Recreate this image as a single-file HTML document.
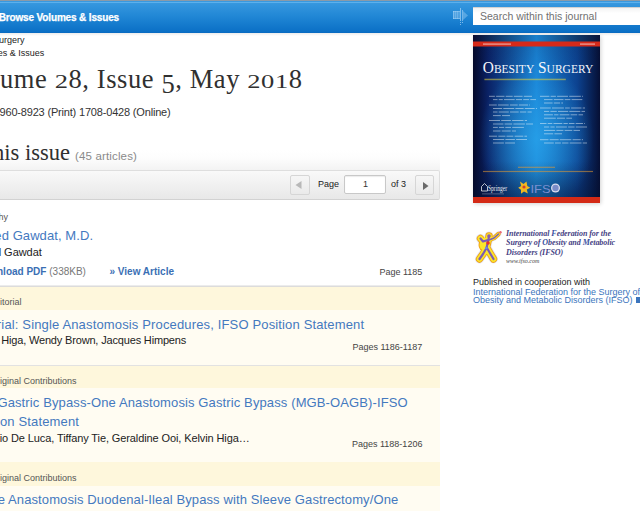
<!DOCTYPE html>
<html><head><meta charset="utf-8">
<style>
html,body{margin:0;padding:0;width:640px;height:511px;overflow:hidden;background:#fff;font-family:"Liberation Sans",sans-serif;}
.a{position:absolute;white-space:nowrap;line-height:1;}
#bar{position:absolute;left:0;top:0;width:640px;height:33px;background:linear-gradient(#3a9ae0,#2288d6 45%,#0b70c6 95%,#0a6ac0);border-top:1px solid #8a9aa8;box-sizing:border-box;}
#bar .hl{position:absolute;left:0;top:1px;width:640px;height:1px;background:#5cb0ec;}
#shadow{position:absolute;left:0;top:33px;width:640px;height:3px;background:linear-gradient(#ececec,#fff);}
.bv{left:-1.3px;top:12.5px;color:#fff;font-weight:bold;font-size:10px;letter-spacing:-0.15px;-webkit-text-stroke:0.25px #fff;}
#search{position:absolute;left:473px;top:7px;width:180px;height:18px;background:linear-gradient(#ececec,#f6f6f6 2px,#fafafa 4px,#fff 6px);box-shadow:inset 0 1px 0 rgba(0,0,0,.12);}
#search span{position:absolute;left:7px;top:4px;font-size:10.5px;color:#707070;line-height:1;white-space:nowrap;}
.s9{font-size:9px;}
.h1{font-family:"Liberation Serif",serif;font-size:26.5px;color:#303030;letter-spacing:0.59px;}
.os{display:inline-block;transform:scaleY(0.72);transform-origin:50% 22.2px;}
.dn{display:inline-block;transform:translateY(4.5px);}
.h2{font-family:"Liberation Serif",serif;font-size:22.5px;color:#303030;}
.cnt{font-size:11.5px;color:#8a8a8a;letter-spacing:0.15px;}
#pagerbg{position:absolute;left:0;top:150px;width:440px;height:20px;background:linear-gradient(#fff,#fdfdfd 40%,#f3f3f3);}
#pager{position:absolute;left:-10px;top:170px;width:450px;height:30px;box-sizing:border-box;border:1px solid #dedede;border-bottom-color:#d2d2d2;border-radius:2px;background:linear-gradient(#f9f9f9,#e8e8e8);}
.btn{position:absolute;width:19px;height:20px;box-sizing:border-box;border:1px solid #d6d6d6;border-radius:2px;background:linear-gradient(#f6f6f6,#eaeaea);}
.inp{position:absolute;left:344px;top:175px;width:42px;height:19px;box-sizing:border-box;border:1px solid #c8c8c8;border-radius:2px;background:#fff;box-shadow:inset 0 1px 1px rgba(0,0,0,.08);}
.cat{font-size:9px;color:#555;}
.title{font-size:13px;color:#4479bf;}
.auth{font-size:11px;color:#222;letter-spacing:-0.15px;}
.bl{font-size:10px;color:#3a6fb4;font-weight:bold;}
.gr{font-size:10px;color:#777;font-weight:normal;}
.pg{font-size:9px;color:#444;}
.sec{position:absolute;left:0;width:440px;}
.ifso{font-family:"Liberation Serif",serif;font-style:italic;font-weight:bold;font-size:8px;color:#464284;letter-spacing:-0.05px;}
</style></head><body>
<div id="bar"><div class="hl"></div></div>
<div id="shadow"></div>
<div class="a bv">Browse Volumes &amp; Issues</div>
<svg style="position:absolute;left:448px;top:4px" width="24" height="24" viewBox="0 0 24 24">
<g fill="#a8d4f6">
<rect x="5" y="7" width="7" height="8" opacity="0.35"/>
<rect x="5" y="7" width="7" height="1" opacity="0.5"/><rect x="5" y="14" width="7" height="1" opacity="0.5"/>
<rect x="5" y="7" width="1" height="8" opacity="0.5"/><rect x="7" y="7" width="1" height="8" opacity="0.3"/><rect x="9" y="7" width="1" height="8" opacity="0.3"/>
<rect x="12" y="4" width="1" height="13" opacity="0.7"/>
<rect x="14" y="6" width="1" height="11" opacity="0.6"/>
<path d="M15 7 L20 11.5 L15 16 Z" opacity="0.4"/>
<rect x="12" y="18" width="1" height="1" opacity="0.7"/><rect x="14" y="18" width="1" height="1" opacity="0.7"/><rect x="12" y="20" width="1" height="1" opacity="0.7"/>
</g></svg>
<div id="search"><span>Search within this journal</span></div>

<div class="a s9" style="left:-1px;top:35.8px;color:#222">urgery</div>
<div class="a s9" style="left:-2.3px;top:49.3px;color:#222">es &amp; Issues</div>

<div id="pagerbg"></div>
<div class="a h1" style="left:0px;top:65.8px">ume <span class="os">2</span>8, Issue <span class="dn">5</span>, May <span class="os">201</span>8</div>
<div class="a" style="left:-0.5px;top:106.7px;font-size:11px;color:#333;letter-spacing:-0.18px">960-8923 (Print) 1708-0428 (Online)</div>
<div class="a h2" style="left:-7px;top:142.2px">his issue</div>
<div class="a cnt" style="left:75px;top:151.3px">(45 articles)</div>

<div id="pager"></div>
<div class="btn" style="left:290px;top:175px;width:20px"></div>
<svg class="a" style="left:295px;top:180.8px" width="8" height="8"><path d="M6.5 0 L0.5 4 L6.5 8Z" fill="#b8b8b8"/></svg>
<div class="a pg" style="left:318px;top:180.3px;color:#222">Page</div>
<div class="inp"></div>
<div class="a pg" style="left:363px;top:180.3px;color:#333">1</div>
<div class="a pg" style="left:391px;top:180.3px;color:#222">of 3</div>
<div class="btn" style="left:415px;top:175px"></div>
<svg class="a" style="left:423px;top:181.5px" width="7" height="8"><path d="M0 0 L5.5 4 L0 8Z" fill="#6a6a6a"/></svg>

<div class="a cat" style="left:-1.5px;top:213.4px">hy</div>
<div class="a title" style="left:-5.7px;top:229px;letter-spacing:0.083px">ed Gawdat, M.D.</div>
<div class="a auth" style="left:-1.3px;top:247.2px;letter-spacing:-0.044px">l Gawdat</div>
<div class="a bl" style="left:-3px;top:266.5px">nload PDF <span class="gr">(338KB)</span></div>
<div class="a bl" style="left:109.5px;top:266.5px">» View Article</div>
<div class="a pg" style="left:379.5px;top:267.9px">Page 1185</div>

<div class="sec" style="top:285px;height:1px;background:#ececec"></div>
<div class="sec" style="top:286px;height:1px;background:#dcdcdc"></div>
<div class="sec" style="top:287px;height:23px;background:#fef7dc"></div>
<div class="sec" style="top:310px;height:55px;background:#fffcf2"></div>
<div class="a cat" style="left:0px;top:297.9px">itorial</div>
<div class="a title" style="left:-3.15px;top:318px;letter-spacing:0.15px">rial: Single Anastomosis Procedures, IFSO Position Statement</div>
<div class="a auth" style="left:1.2px;top:335.2px;letter-spacing:-0.166px">Higa, Wendy Brown, Jacques Himpens</div>
<div class="a pg" style="left:352.5px;top:343.2px">Pages 1186-1187</div>

<div class="sec" style="top:365px;height:1px;background:#e2e2e2"></div>
<div class="sec" style="top:366px;height:22px;background:#fef7dc"></div>
<div class="sec" style="top:388px;height:74px;background:#fffcf2"></div>
<div class="a cat" style="left:0px;top:376.9px">iginal Contributions</div>
<div class="a title" style="left:-2.6px;top:396.3px;letter-spacing:0.12px">Gastric Bypass-One Anastomosis Gastric Bypass (MGB-OAGB)-IFSO</div>
<div class="a title" style="left:-0.1px;top:414.8px;letter-spacing:0.15px">on Statement</div>
<div class="a auth" style="left:-0.3px;top:433.3px;letter-spacing:-0.106px">io De Luca, Tiffany Tie, Geraldine Ooi, Kelvin Higa…</div>
<div class="a pg" style="left:352px;top:439.9px">Pages 1188-1206</div>

<div class="sec" style="top:462px;height:24px;background:#fef7dc"></div>
<div class="sec" style="top:486px;height:30px;background:#fffcf2"></div>
<div class="a cat" style="left:0px;top:473.9px">iginal Contributions</div>
<div class="a title" style="left:-2.3px;top:493.2px;letter-spacing:0.108px">e Anastomosis Duodenal-Ileal Bypass with Sleeve Gastrectomy/One</div>

<!-- right column -->
<div class="a" style="left:473px;top:35px;width:127px;height:168px;box-shadow:1px 1px 4px rgba(0,0,0,0.18)"></div>
<svg style="position:absolute;left:473px;top:35px" width="127" height="168" viewBox="0 0 127 168">
<defs>
<linearGradient id="hg" x1="0" x2="1" y1="0" y2="0"><stop offset="0" stop-color="#040828"/><stop offset="0.12" stop-color="#0a2266"/><stop offset="0.5" stop-color="#1a84d6"/><stop offset="0.82" stop-color="#0c4290"/><stop offset="1" stop-color="#060f34"/></linearGradient>
<radialGradient id="rg" cx="50%" cy="62%" r="45%"><stop offset="0" stop-color="#2aa8ee" stop-opacity="0.7"/><stop offset="1" stop-color="#2aa8ee" stop-opacity="0"/></radialGradient>
<linearGradient id="vg" x1="0" x2="0" y1="0" y2="1"><stop offset="0" stop-color="#06102e" stop-opacity="0.15"/><stop offset="0.2" stop-color="#06102e" stop-opacity="0"/><stop offset="0.75" stop-color="#06102e" stop-opacity="0"/><stop offset="1" stop-color="#06102e" stop-opacity="0.55"/></linearGradient>
<linearGradient id="tg" x1="0" x2="1" y1="0" y2="0"><stop offset="0" stop-color="#0a0c30"/><stop offset="0.5" stop-color="#1a80cc"/><stop offset="1" stop-color="#0a1236"/></linearGradient>
</defs>
<rect width="127" height="168" fill="url(#hg)"/>
<rect width="127" height="168" fill="url(#rg)"/>
<rect width="127" height="168" fill="url(#vg)"/>
<rect width="127" height="7" fill="url(#tg)"/>
<rect y="6.5" width="127" height="5" fill="#d62a1a"/>
<rect x="10" y="8.4" width="28" height="1.4" fill="#fff" opacity="0.5"/>
<rect x="107" y="8.4" width="15" height="1.4" fill="#fff" opacity="0.5"/>
<text x="9.8" y="38" font-family="Liberation Serif" font-size="16" fill="#f4f6fa" textLength="110.5" lengthAdjust="spacingAndGlyphs">O<tspan font-size="12">BESITY</tspan> S<tspan font-size="12">URGERY</tspan></text>
<rect x="11.4" y="43.7" width="81.4" height="1.5" fill="#e4d23a" opacity="0.55"/>
<g fill="#fff" opacity="0.45">
<rect x="16.0" y="60.8" width="5.9" height="1.0"/>
<rect x="23.1" y="60.8" width="8.4" height="1.0"/>
<rect x="32.7" y="60.8" width="7.0" height="1.0"/>
<rect x="40.8" y="60.8" width="8.8" height="1.0"/>
<rect x="50.8" y="60.8" width="8.2" height="1.0"/>
<rect x="20.0" y="64.1" width="4.5" height="1.0"/>
<rect x="25.7" y="64.1" width="4.1" height="1.0"/>
<rect x="31.0" y="64.1" width="10.7" height="1.0"/>
<rect x="42.9" y="64.1" width="6.1" height="1.0"/>
<rect x="50.2" y="64.1" width="5.9" height="1.0"/>
<rect x="57.3" y="64.1" width="5.7" height="1.0"/>
<rect x="16.0" y="69.5" width="7.8" height="1.0"/>
<rect x="25.0" y="69.5" width="10.7" height="1.0"/>
<rect x="36.9" y="69.5" width="7.8" height="1.0"/>
<rect x="45.9" y="69.5" width="9.1" height="1.0"/>
<rect x="56.2" y="69.5" width="0.8" height="1.0"/>
<rect x="20.0" y="73.0" width="9.1" height="1.0"/>
<rect x="30.3" y="73.0" width="10.9" height="1.0"/>
<rect x="42.4" y="73.0" width="8.2" height="1.0"/>
<rect x="51.8" y="73.0" width="9.9" height="1.0"/>
<rect x="62.9" y="73.0" width="1.1" height="1.0"/>
<rect x="20.0" y="76.5" width="4.5" height="1.0"/>
<rect x="25.7" y="76.5" width="10.1" height="1.0"/>
<rect x="37.0" y="76.5" width="8.7" height="1.0"/>
<rect x="46.9" y="76.5" width="6.4" height="1.0"/>
<rect x="54.5" y="76.5" width="4.2" height="1.0"/>
<rect x="60.0" y="76.5" width="0.0" height="1.0"/>
<rect x="20.0" y="80.1" width="7.8" height="1.0"/>
<rect x="29.0" y="80.1" width="8.0" height="1.0"/>
<rect x="16.0" y="85.0" width="11.0" height="1.0"/>
<rect x="28.2" y="85.0" width="9.7" height="1.0"/>
<rect x="39.1" y="85.0" width="11.4" height="1.0"/>
<rect x="51.7" y="85.0" width="2.3" height="1.0"/>
<rect x="20.0" y="88.5" width="10.4" height="1.0"/>
<rect x="31.6" y="88.5" width="7.6" height="1.0"/>
<rect x="40.4" y="88.5" width="11.5" height="1.0"/>
<rect x="53.0" y="88.5" width="7.0" height="1.0"/>
<rect x="20.0" y="91.9" width="4.8" height="1.0"/>
<rect x="26.0" y="91.9" width="5.1" height="1.0"/>
<rect x="32.3" y="91.9" width="5.7" height="1.0"/>
<rect x="39.2" y="91.9" width="11.7" height="1.0"/>
<rect x="20.0" y="95.5" width="7.5" height="1.0"/>
<rect x="28.7" y="95.5" width="9.0" height="1.0"/>
<rect x="38.9" y="95.5" width="4.1" height="1.0"/>
<rect x="16.0" y="100.7" width="8.1" height="1.0"/>
<rect x="25.3" y="100.7" width="7.1" height="1.0"/>
<rect x="33.5" y="100.7" width="6.8" height="1.0"/>
<rect x="41.6" y="100.7" width="8.7" height="1.0"/>
<rect x="51.4" y="100.7" width="2.6" height="1.0"/>
<rect x="20.0" y="104.0" width="11.2" height="1.0"/>
<rect x="32.4" y="104.0" width="9.5" height="1.0"/>
<rect x="43.1" y="104.0" width="10.9" height="1.0"/>
<rect x="20.0" y="107.5" width="10.9" height="1.0"/>
<rect x="32.1" y="107.5" width="9.9" height="1.0"/>
<rect x="67.0" y="60.8" width="9.4" height="1.0"/>
<rect x="77.6" y="60.8" width="5.3" height="1.0"/>
<rect x="84.1" y="60.8" width="10.9" height="1.0"/>
<rect x="96.2" y="60.8" width="11.7" height="1.0"/>
<rect x="109.1" y="60.8" width="0.9" height="1.0"/>
<rect x="71.0" y="64.1" width="8.6" height="1.0"/>
<rect x="80.8" y="64.1" width="9.7" height="1.0"/>
<rect x="91.7" y="64.1" width="5.7" height="1.0"/>
<rect x="98.6" y="64.1" width="10.7" height="1.0"/>
<rect x="71.0" y="67.5" width="8.6" height="1.0"/>
<rect x="80.8" y="67.5" width="6.3" height="1.0"/>
<rect x="88.3" y="67.5" width="1.7" height="1.0"/>
<rect x="67.0" y="72.5" width="10.8" height="1.0"/>
<rect x="79.0" y="72.5" width="11.9" height="1.0"/>
<rect x="92.1" y="72.5" width="4.7" height="1.0"/>
<rect x="98.1" y="72.5" width="10.4" height="1.0"/>
<rect x="109.7" y="72.5" width="2.3" height="1.0"/>
<rect x="71.0" y="75.9" width="5.2" height="1.0"/>
<rect x="77.4" y="75.9" width="6.4" height="1.0"/>
<rect x="85.0" y="75.9" width="10.2" height="1.0"/>
<rect x="96.3" y="75.9" width="11.0" height="1.0"/>
<rect x="108.5" y="75.9" width="3.5" height="1.0"/>
<rect x="71.0" y="79.3" width="8.9" height="1.0"/>
<rect x="81.1" y="79.3" width="4.4" height="1.0"/>
<rect x="86.7" y="79.3" width="9.7" height="1.0"/>
<rect x="97.6" y="79.3" width="6.6" height="1.0"/>
<rect x="105.5" y="79.3" width="4.5" height="1.0"/>
<rect x="71.0" y="82.7" width="11.8" height="1.0"/>
<rect x="84.0" y="82.7" width="8.0" height="1.0"/>
<rect x="93.3" y="82.7" width="5.7" height="1.0"/>
<rect x="67.0" y="88.0" width="6.5" height="1.0"/>
<rect x="74.7" y="88.0" width="4.6" height="1.0"/>
<rect x="80.5" y="88.0" width="8.8" height="1.0"/>
<rect x="90.5" y="88.0" width="4.3" height="1.0"/>
<rect x="95.9" y="88.0" width="5.6" height="1.0"/>
<rect x="102.7" y="88.0" width="7.3" height="1.0"/>
<rect x="111.2" y="88.0" width="0.8" height="1.0"/>
<rect x="71.0" y="91.5" width="5.2" height="1.0"/>
<rect x="77.4" y="91.5" width="4.3" height="1.0"/>
<rect x="83.0" y="91.5" width="10.9" height="1.0"/>
<rect x="95.1" y="91.5" width="6.5" height="1.0"/>
<rect x="102.8" y="91.5" width="11.2" height="1.0"/>
<rect x="71.0" y="94.9" width="11.2" height="1.0"/>
<rect x="83.4" y="94.9" width="7.0" height="1.0"/>
<rect x="91.6" y="94.9" width="7.7" height="1.0"/>
<rect x="100.5" y="94.9" width="6.5" height="1.0"/>
<rect x="71.0" y="98.3" width="9.2" height="1.0"/>
<rect x="81.4" y="98.3" width="7.6" height="1.0"/>
<rect x="67.0" y="104.2" width="8.5" height="1.0"/>
<rect x="76.7" y="104.2" width="9.0" height="1.0"/>
<rect x="86.8" y="104.2" width="11.5" height="1.0"/>
<rect x="99.6" y="104.2" width="8.1" height="1.0"/>
<rect x="108.8" y="104.2" width="1.2" height="1.0"/>
<rect x="71.0" y="107.5" width="9.8" height="1.0"/>
<rect x="82.0" y="107.5" width="5.9" height="1.0"/>
<rect x="89.1" y="107.5" width="6.4" height="1.0"/>
<rect x="96.7" y="107.5" width="11.8" height="1.0"/>
<rect x="109.7" y="107.5" width="4.3" height="1.0"/>
</g>
<rect x="45" y="131.7" width="37" height="1.2" fill="#e89a30" opacity="0.55"/>
<rect x="10" y="135.9" width="110" height="1.2" fill="#e89a30" opacity="0.55"/>
<g opacity="0.9"><path d="M8.5 156 v-4.5 l3 -3 l3 3 v4.5z" fill="none" stroke="#fff" stroke-width="0.8"/>
<text x="15" y="155.5" font-family="Liberation Serif" font-size="8" fill="#fff" textLength="19" lengthAdjust="spacingAndGlyphs">Springer</text></g>
<rect x="9" y="158.5" width="22" height="0.8" fill="#fff" opacity="0.35"/>
<g><path d="M47 146.5 l3.5 2.5 l3-2.5 l0.8 4.5 l3 1.8 l-3.5 1.8 l1 4 l-3.8-2 l-3 2.2 l0-4 l-2.8-2 l3-1.8z" fill="#f0b820"/><circle cx="51" cy="152" r="1.6" fill="#d04030"/>
<text x="57.5" y="158" font-family="Liberation Sans" font-size="11.5" fill="#7a8fd0" textLength="20" lengthAdjust="spacingAndGlyphs">IFS</text>
<circle cx="82.5" cy="153" r="4.5" fill="#d8dcee"/><circle cx="82.5" cy="153" r="3.2" fill="#7a8cc8"/></g>
<rect y="162" width="127" height="6" fill="#d42a16"/>
</svg>

<svg style="position:absolute;left:472px;top:226px" width="34" height="40" viewBox="0 0 34 40">
<g fill="none" stroke-linecap="round" stroke-linejoin="round">
<path d="M17 10 L16.5 13 L14.5 22 M16 14 L11 15.5 L8.5 12.5 M14.5 22 L11 28 L7.5 33 M15 22 L18.5 28 L21.5 33" stroke="#c8d4f4" stroke-width="9" opacity="0.55"/>
<path d="M17 14 L22 12 L26.5 8" stroke="#c8d4f4" stroke-width="5.5" opacity="0.55"/>
<path d="M17 10 L16.5 13 L14.5 22 M16 14 L11 15.5 L8.5 12.5 M14.5 22 L11 28 L7.5 33 M15 22 L18.5 28 L21.5 33" stroke="#f0a018" stroke-width="7.4"/>
<path d="M17 14 L22 12 L26.5 8" stroke="#f0a018" stroke-width="4.4"/>
<ellipse cx="11.5" cy="19" rx="5" ry="6" fill="#f0a018" stroke="none"/>
<path d="M17 10 L16.5 13 L14.5 22 M16 14 L11 15.5 L8.5 12.5 M14.5 22 L11 28 L7.5 33 M15 22 L18.5 28 L21.5 33" stroke="#fbe62a" stroke-width="5.6"/>
<path d="M17 14 L22 12 L26.5 8" stroke="#fbe62a" stroke-width="3"/>
<ellipse cx="11.5" cy="19" rx="4" ry="5" fill="#fbe62a" stroke="none"/>
<path d="M17 10 L16.5 13 L14.5 22 M16 14 L11 15.5 L8.5 12.5 M14.5 22 L11 28 L7.5 33 M15 22 L18.5 28 L21.5 33" stroke="#7c5cb4" stroke-width="2.2"/>
<path d="M17 14 L22 12 L26.5 8" stroke="#7c5cb4" stroke-width="1.5"/>
</g>
<circle cx="17" cy="10" r="1.8" fill="#8a5cb0"/>
<circle cx="16" cy="17" r="1.8" fill="#e8302a"/>
<circle cx="14.3" cy="22" r="1.3" fill="#6a8ce4"/>
<circle cx="28.5" cy="6.2" r="1.2" fill="#ea6878"/>
</svg>
<div class="a ifso" style="left:506px;top:229.7px">International <span style="color:#3850a0">F</span>ederation for the</div>
<div class="a ifso" style="left:506px;top:239.2px">Surgery of <span style="color:#3850a0">O</span>besity and <span style="color:#3850a0">M</span>etabolic</div>
<div class="a ifso" style="left:506px;top:248.5px">Disorders (IFSO)</div>
<div class="a" style="left:506px;top:257.5px;font-family:'Liberation Serif',serif;font-style:italic;font-size:6px;color:#444">www.ifso.com</div>

<div class="a" style="left:473px;top:277.7px;font-size:9px;color:#222">Published in cooperation with</div>
<div class="a" style="left:473px;top:287.6px;font-size:9px;color:#3b75bd">International Federation for the Surgery of</div>
<div class="a" style="left:473px;top:295.9px;font-size:9px;color:#3b75bd">Obesity and Metabolic Disorders (IFSO)</div>
<div class="a" style="left:636px;top:297px;width:4px;height:6px;background:#3b75bd"></div>
</body></html>
